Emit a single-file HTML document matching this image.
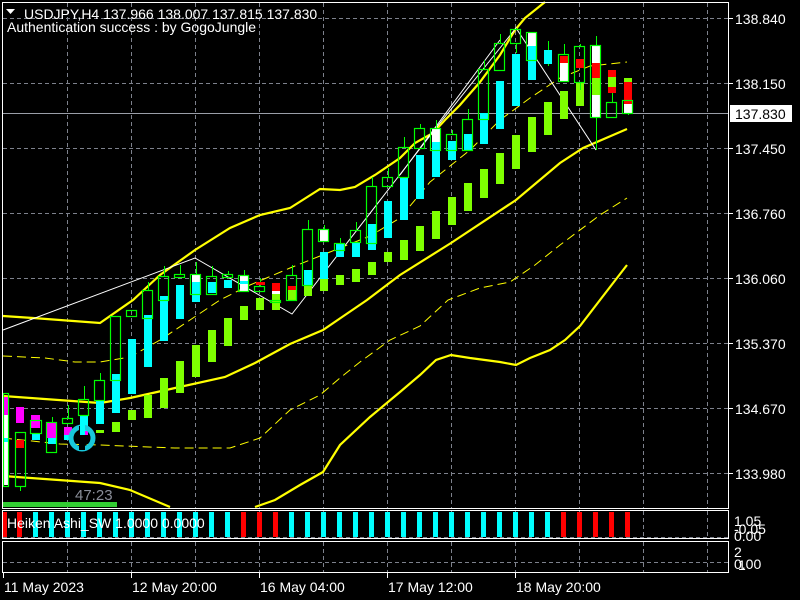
<!DOCTYPE html>
<html><head><meta charset="utf-8"><style>
html,body{margin:0;padding:0;background:#000;}
body{width:800px;height:600px;overflow:hidden;position:relative;font-family:"Liberation Sans",sans-serif;}
svg{position:absolute;left:0;top:0;}
text{font-family:"Liberation Sans",sans-serif;font-size:14px;fill:#fff;}
</style></head><body>
<svg width="800" height="600" viewBox="0 0 800 600" xmlns="http://www.w3.org/2000/svg">
<rect width="800" height="600" fill="#000"/>
<g stroke="#7d818c" stroke-width="1" stroke-dasharray="4,3">
<path d="M67.5 3V508M131.5 3V508M195.5 3V508M259.5 3V508M323.5 3V508M387.5 3V508M451.5 3V508M515.5 3V508M579.5 3V508M643.5 3V508M707.5 3V508"/>
<path d="M3 18.5H728M3 83.5H728M3 148.5H728M3 213.5H728M3 278.5H728M3 343.5H728M3 408.5H728M3 473.5H728"/>
<path d="M67.5 511V538M131.5 511V538M195.5 511V538M259.5 511V538M323.5 511V538M387.5 511V538M451.5 511V538M515.5 511V538M579.5 511V538M643.5 511V538M707.5 511V538"/>
<path d="M67.5 542V572M131.5 542V572M195.5 542V572M259.5 542V572M323.5 542V572M387.5 542V572M451.5 542V572M515.5 542V572M579.5 542V572M643.5 542V572M707.5 542V572"/>
<path d="M3 537.5H728M3 562.5H728"/>
</g>
<path d="M3 113.5H728" stroke="#9a9ea8" stroke-width="1"/>
<g fill="none" stroke="#ffff00" stroke-width="1" stroke-dasharray="9,5">
<path d="M3 356 L45 358 L75 362 L100 362 L130 357 L160 340 L190 320 L220 300 L250 285 L290 268 L330 252 L370 236 L400 218 L430 182 L470 150 L500 120 L530 98 L560 78 L590 66 L627 62"/>
<path d="M3 438 L60 444 L100 445 L175 448 L230 448 L260 438 L290 410 L320 395 L340 378 L360 362 L390 340 L420 326 L448 300 L480 288 L510 282 L535 265 L560 245 L600 215 L627 198"/>
</g>
<g fill="none" stroke="#ffff00" stroke-width="2.2">
<path d="M3 316 L33 318 L100 323 L133 300 L160 275 L195 250 L230 228 L260 215 L290 208 L320 189 L340 190 L355 187 L375 175 L400 158 L415 143 L433 133 L445 120 L460 105 L480 82 L500 55 L515 30 L525 18 L545 2"/>
<path d="M3 396 L100 403 L130 398 L175 388 L225 377 L255 363 L290 344 L323 330 L345 315 L367 300 L400 275 L451 243 L516 200 L560 163 L583 148 L627 129"/>
<path d="M3 476 L100 483 L130 490 L170 507 M255 507 L275 500 L300 485 L323 472 L340 445 L370 417 L400 392 L420 375 L436 360 L451 355 L470 358 L500 362 L516 365 L530 358 L550 350 L565 340 L580 326 L600 300 L627 265"/>
</g>
<path d="M3 330 L195 258 L292 314 L436 128 L516 28 L596 150" fill="none" stroke="#fff" stroke-width="1"/>
<path d="M400 175 L500 40" fill="none" stroke="#fff" stroke-width="1"/>
<g fill="#7fff00">
<rect x="96" y="430" width="8" height="3"/><rect x="112" y="422" width="8" height="10"/><rect x="128" y="410" width="8" height="10"/>
<rect x="144" y="395" width="8" height="23"/><rect x="160" y="378" width="8" height="30"/><rect x="176" y="361" width="8" height="32"/>
<rect x="192" y="345" width="8" height="32"/><rect x="208" y="330" width="8" height="32"/><rect x="224" y="318" width="8" height="28"/>
<rect x="240" y="306" width="8" height="14"/><rect x="256" y="298" width="8" height="12"/><rect x="272" y="294" width="8" height="16"/>
<rect x="288" y="290" width="8" height="10"/><rect x="304" y="286" width="8" height="10"/><rect x="320" y="279" width="8" height="12"/>
<rect x="336" y="275" width="8" height="10"/><rect x="352" y="269" width="8" height="13"/><rect x="368" y="262" width="8" height="13"/>
<rect x="384" y="252" width="8" height="10"/><rect x="400" y="240" width="8" height="20"/><rect x="416" y="226" width="8" height="25"/>
<rect x="432" y="211" width="8" height="28"/><rect x="448" y="197" width="8" height="28"/><rect x="464" y="183" width="8" height="28"/>
<rect x="480" y="169" width="8" height="29"/><rect x="496" y="153" width="8" height="31"/><rect x="512" y="135" width="8" height="34"/>
<rect x="528" y="117" width="8" height="35"/><rect x="544" y="102" width="8" height="33"/><rect x="560" y="91" width="8" height="28"/>
<rect x="576" y="83" width="8" height="23"/><rect x="592" y="78" width="8" height="17"/><rect x="608" y="77" width="8" height="10"/>
<rect x="624" y="78" width="8" height="4"/>
</g>
<g stroke="#00ff00" stroke-width="1">
<path d="M20.5 487V491M52.5 417V422M68.5 405V418M84.5 386V399M100.5 373V380M148.5 282V290M164.5 266V276M180.5 265V274M196.5 262V274M212.5 266V276M228.5 271V274M244.5 270V275M260.5 278V286M292.5 265V275M308.5 220V229M324.5 225V229M340.5 238V243M356.5 222V230M372.5 177V186M388.5 168V177M404.5 137V147M420.5 124V128M436.5 120V128M452.5 130V134M468.5 109V119M484.5 60V69M500.5 34V43M516.5 28V29M516.5 43V53M548.5 41V66M564.5 44V54M580.5 44V46M580.5 82V90M596.5 36V150M612.5 93V102M628.5 113V115"/>
</g>
<g fill="#fff">
<rect x="4" y="397" width="4" height="88"/>
<rect x="192" y="274" width="9" height="8"/><rect x="240" y="275" width="9" height="16"/><rect x="320" y="229" width="9" height="12"/>
<rect x="432" y="128" width="9" height="14"/><rect x="528" y="32" width="9" height="14"/><rect x="560" y="62" width="9" height="19"/>
<rect x="592" y="45" width="9" height="72"/><rect x="624" y="104" width="9" height="9"/><rect x="272" y="291" width="8" height="3"/>
</g>
<g fill="#00ffff">
<rect x="4" y="438" width="4" height="4"/><rect x="32" y="433" width="8" height="7"/><rect x="48" y="436" width="8" height="8"/>
<rect x="64" y="435" width="8" height="5"/><rect x="80" y="415" width="8" height="17"/><rect x="96" y="400" width="8" height="24"/>
<rect x="112" y="374" width="8" height="39"/><rect x="128" y="339" width="8" height="55"/><rect x="144" y="315" width="8" height="52"/>
<rect x="160" y="296" width="8" height="45"/><rect x="176" y="285" width="8" height="34"/><rect x="192" y="282" width="8" height="20"/>
<rect x="208" y="282" width="8" height="11"/><rect x="224" y="280" width="8" height="8"/><rect x="240" y="281" width="8" height="3"/>
<rect x="304" y="270" width="8" height="16"/><rect x="320" y="252" width="8" height="27"/><rect x="336" y="243" width="8" height="14"/>
<rect x="352" y="242" width="8" height="15"/><rect x="368" y="224" width="8" height="26"/><rect x="384" y="201" width="8" height="37"/>
<rect x="400" y="177" width="8" height="43"/><rect x="416" y="155" width="8" height="44"/><rect x="432" y="142" width="8" height="35"/>
<rect x="448" y="141" width="8" height="19"/><rect x="464" y="134" width="8" height="16"/><rect x="480" y="113" width="8" height="31"/>
<rect x="496" y="81" width="8" height="48"/><rect x="512" y="54" width="8" height="52"/><rect x="528" y="46" width="8" height="34"/>
<rect x="544" y="50" width="8" height="14"/>
</g>
<g fill="#ff00ff">
<rect x="4" y="397" width="4" height="18"/><rect x="16" y="407" width="8" height="16"/><rect x="31" y="415" width="9" height="13"/>
<rect x="47" y="422" width="9" height="16"/><rect x="64" y="427" width="8" height="8"/><rect x="80" y="431" width="8" height="4"/>
</g>
<g fill="#ff0000">
<rect x="16" y="440" width="8" height="8"/><rect x="256" y="282" width="9" height="3"/><rect x="272" y="283" width="8" height="8"/>
<rect x="288" y="286" width="8" height="4"/><rect x="560" y="56" width="9" height="7"/><rect x="576" y="59" width="8" height="9"/>
<rect x="592" y="63" width="9" height="15"/><rect x="608" y="70" width="8" height="7"/><rect x="608" y="87" width="8" height="6"/>
<rect x="624" y="82" width="8" height="22"/>
</g>
<rect x="592" y="78" width="9" height="17" fill="#7fff00"/>
<g fill="none" stroke="#00ff00" stroke-width="1.2">
<rect x="3.5" y="393.5" width="5" height="93"/>
<rect x="15.5" y="432.5" width="10" height="54"/><rect x="30.5" y="420.5" width="11" height="13"/><rect x="46.5" y="422.5" width="10" height="30"/>
<rect x="62.5" y="418.5" width="10" height="5"/><rect x="78.5" y="399.5" width="10" height="16"/><rect x="94.5" y="380.5" width="10" height="20"/>
<rect x="110.5" y="316.5" width="10" height="64"/><rect x="126.5" y="310.5" width="10" height="6"/><rect x="142.5" y="290.5" width="10" height="28"/>
<rect x="158.5" y="276.5" width="10" height="24"/><rect x="174.5" y="274.5" width="10" height="3"/><rect x="190.5" y="274.5" width="10" height="20"/>
<rect x="206.5" y="276.5" width="10" height="18"/><rect x="222.5" y="274.5" width="10" height="3"/><rect x="238.5" y="275.5" width="10" height="16"/>
<rect x="254.5" y="286.5" width="10" height="5"/><rect x="270.5" y="300.5" width="10" height="2"/><rect x="286.5" y="275.5" width="10" height="25"/>
<rect x="302.5" y="229.5" width="10" height="56"/><rect x="318.5" y="229.5" width="10" height="12"/><rect x="334.5" y="243.5" width="10" height="7"/>
<rect x="350.5" y="230.5" width="10" height="12"/><rect x="366.5" y="186.5" width="10" height="57"/><rect x="382.5" y="177.5" width="10" height="9"/>
<rect x="398.5" y="147.5" width="10" height="30"/><rect x="414.5" y="128.5" width="10" height="20"/><rect x="430.5" y="128.5" width="10" height="22"/>
<rect x="446.5" y="134.5" width="10" height="16"/><rect x="462.5" y="119.5" width="10" height="31"/><rect x="478.5" y="69.5" width="10" height="50"/>
<rect x="494.5" y="43.5" width="10" height="27"/><rect x="510.5" y="29.5" width="10" height="14"/><rect x="526.5" y="32.5" width="10" height="28"/>
<rect x="558.5" y="54.5" width="10" height="27"/><rect x="574.5" y="46.5" width="10" height="36"/><rect x="590.5" y="45.5" width="10" height="72"/>
<rect x="606.5" y="102.5" width="10" height="15"/><rect x="622.5" y="100.5" width="10" height="13"/>
</g>
<circle cx="82" cy="438" r="11" fill="none" stroke="#18c8dc" stroke-width="5"/>
<rect x="79" y="426" width="6" height="24" fill="#000"/>
<rect x="80" y="420" width="5" height="15" fill="#00ffff"/>
<text x="75" y="500" style="fill:#8a8e99;font-size:15px">47:23</text>
<rect x="3" y="502" width="114" height="5" fill="#32cd32"/>
<g fill="#00ffff">
<rect x="33" y="512" width="5" height="25"/><rect x="49" y="512" width="5" height="25"/><rect x="65" y="512" width="5" height="25"/><rect x="81" y="512" width="5" height="25"/>
<rect x="97" y="512" width="5" height="25"/><rect x="113" y="512" width="5" height="25"/><rect x="129" y="512" width="5" height="25"/><rect x="145" y="512" width="5" height="25"/>
<rect x="161" y="512" width="5" height="25"/><rect x="177" y="512" width="5" height="25"/><rect x="193" y="512" width="5" height="25"/><rect x="209" y="512" width="5" height="25"/>
<rect x="225" y="512" width="5" height="25"/><rect x="289" y="512" width="5" height="25"/><rect x="305" y="512" width="5" height="25"/><rect x="321" y="512" width="5" height="25"/>
<rect x="337" y="512" width="5" height="25"/><rect x="353" y="512" width="5" height="25"/><rect x="369" y="512" width="5" height="25"/><rect x="385" y="512" width="5" height="25"/>
<rect x="401" y="512" width="5" height="25"/><rect x="417" y="512" width="5" height="25"/><rect x="433" y="512" width="5" height="25"/><rect x="449" y="512" width="5" height="25"/>
<rect x="465" y="512" width="5" height="25"/><rect x="481" y="512" width="5" height="25"/><rect x="497" y="512" width="5" height="25"/><rect x="513" y="512" width="5" height="25"/>
<rect x="529" y="512" width="5" height="25"/><rect x="545" y="512" width="5" height="25"/>
</g>
<g fill="#ff0000">
<rect x="3" y="512" width="4" height="25"/><rect x="17" y="512" width="5" height="25"/><rect x="241" y="512" width="5" height="25"/><rect x="257" y="512" width="5" height="25"/><rect x="273" y="512" width="5" height="25"/>
<rect x="561" y="512" width="5" height="25"/><rect x="577" y="512" width="5" height="25"/><rect x="593" y="512" width="5" height="25"/><rect x="609" y="512" width="5" height="25"/><rect x="625" y="512" width="5" height="25"/>
</g>
<text x="7" y="528">Heiken Ashi_SW 1.0000 0.0000</text>
<g fill="none" stroke="#fff" stroke-width="1">
<rect x="2.5" y="2.5" width="726" height="506"/>
<rect x="2.5" y="510.5" width="726" height="28"/>
<rect x="2.5" y="541.5" width="726" height="31"/>
</g>
<path d="M3.5 573V578M131.5 573V578M259.5 573V578M387.5 573V578M515.5 573V578M729 18.5H733M729 83.5H733M729 148.5H733M729 213.5H733M729 278.5H733M729 343.5H733M729 408.5H733M729 473.5H733" stroke="#fff"/>
<path d="M6 9 L15 9 L10.5 14 Z" fill="#fff"/>
<text x="24" y="19">USDJPY,H4  137.966 138.007 137.815 137.830</text>
<text x="7" y="32">Authentication success : by GogoJungle</text>
<text x="735" y="24">138.840</text>
<text x="735" y="89">138.150</text>
<text x="735" y="154">137.450</text>
<text x="735" y="219">136.760</text>
<text x="735" y="284">136.060</text>
<text x="735" y="349">135.370</text>
<text x="735" y="414">134.670</text>
<text x="735" y="479">133.980</text>
<rect x="730" y="105" width="62" height="17" fill="#fff"/>
<text x="735" y="119" style="fill:#000">137.830</text>
<text x="734" y="526">1.05</text>
<text x="734" y="534">-0.05</text>
<text x="734" y="541">0.00</text>
<text x="734" y="557">2</text>
<text x="734" y="569">0.00</text>
<text x="738" y="570">1</text>
<text x="4" y="592">11 May 2023</text>
<text x="132" y="592">12 May 20:00</text>
<text x="260" y="592">16 May 04:00</text>
<text x="388" y="592">17 May 12:00</text>
<text x="516" y="592">18 May 20:00</text>
</svg>
</body></html>
